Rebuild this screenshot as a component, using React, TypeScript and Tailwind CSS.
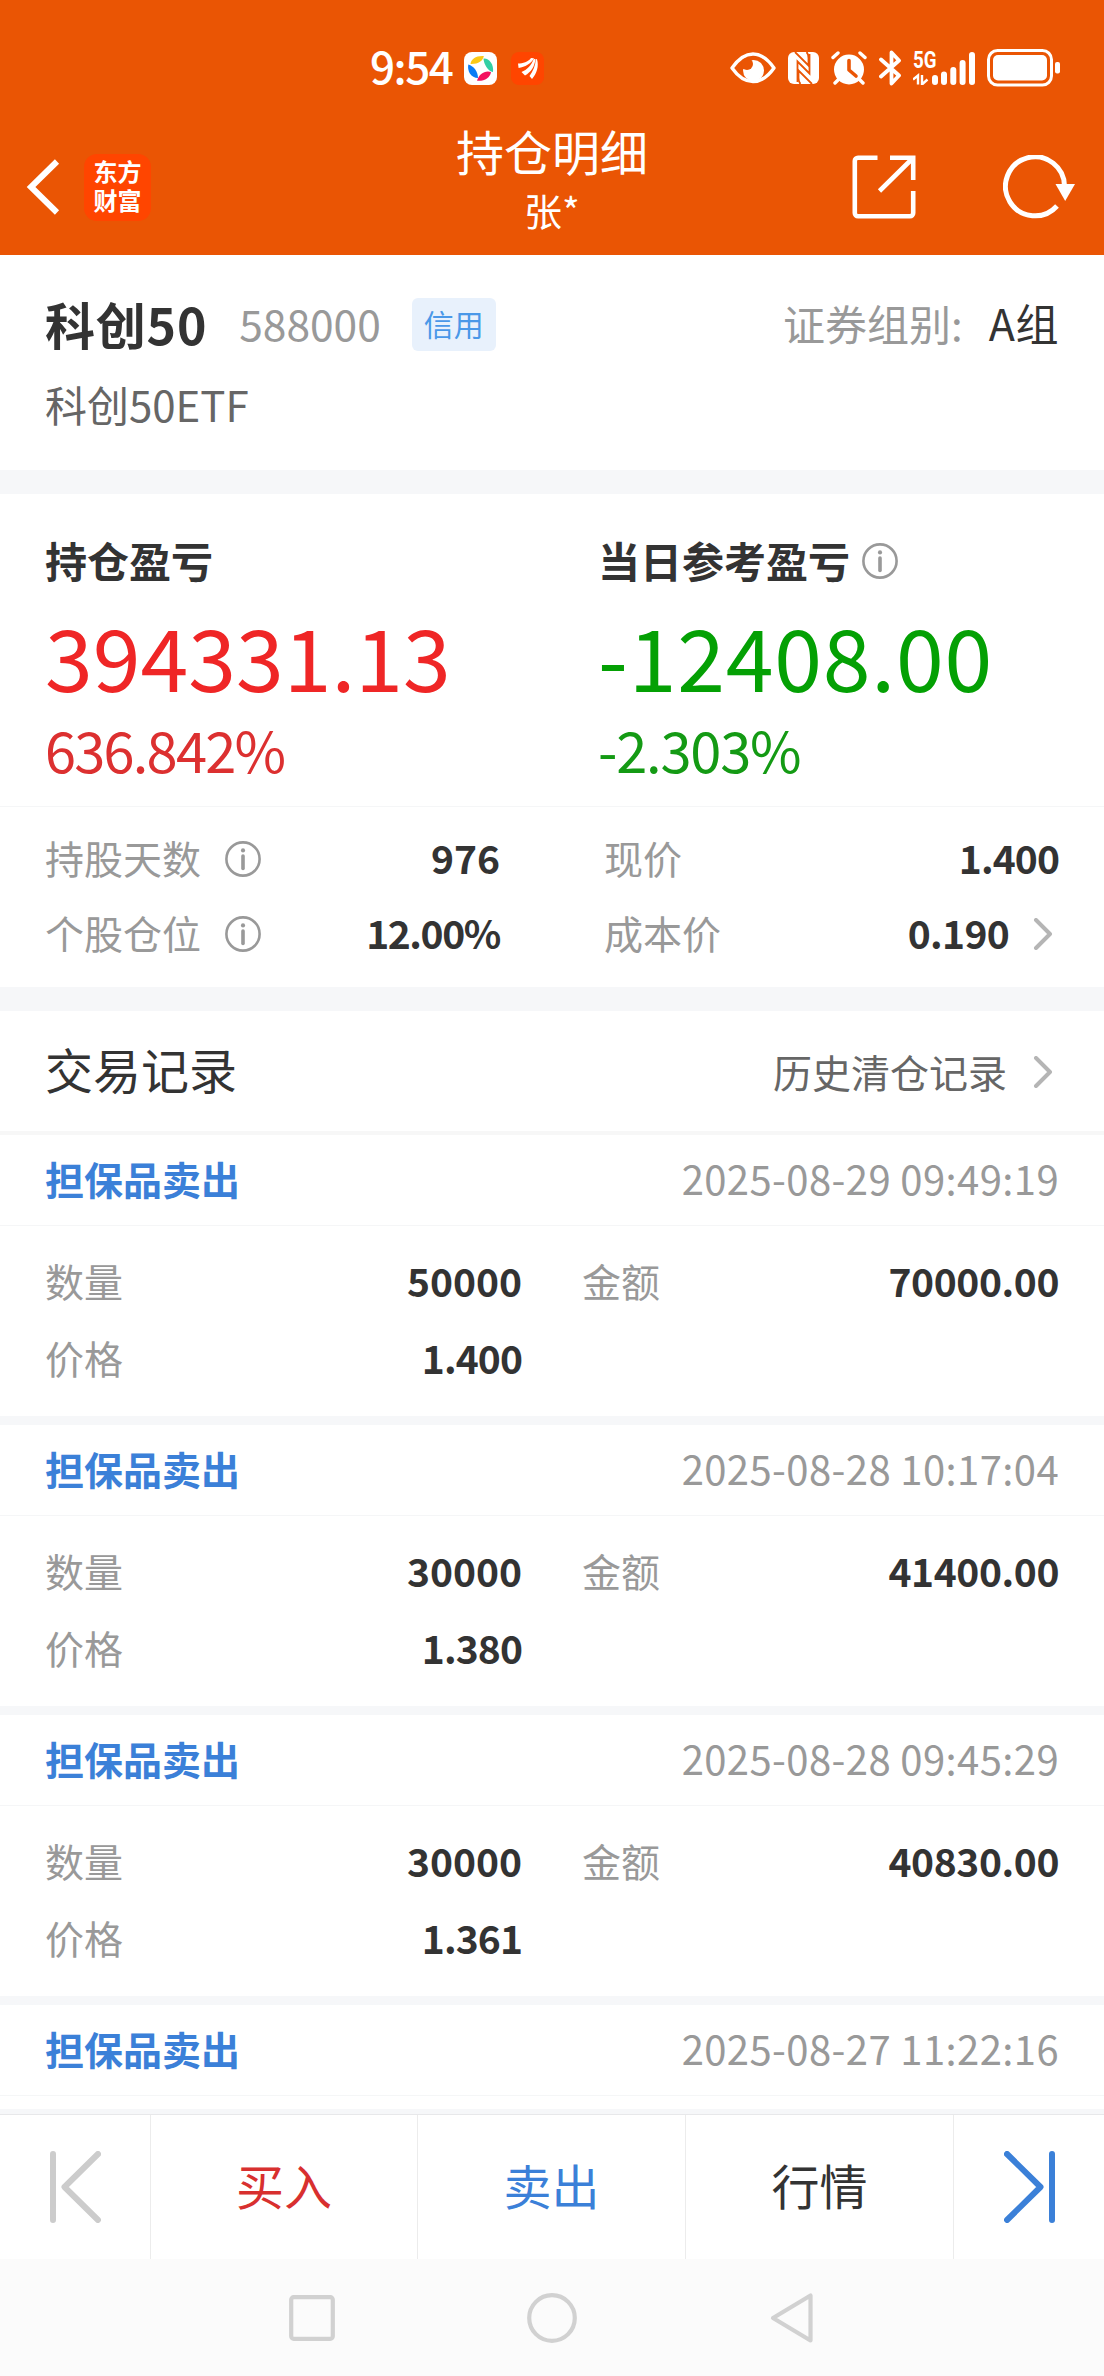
import type { ReactNode } from "react";

type TradeRecord = {
  type: string;
  time: string;
  quantity: string;
  amount: string;
  price: string;
};

const records: TradeRecord[] = [
  { type: "担保品卖出", time: "2025-08-29 09:49:19", quantity: "50000", amount: "70000.00", price: "1.400" },
  { type: "担保品卖出", time: "2025-08-28 10:17:04", quantity: "30000", amount: "41400.00", price: "1.380" },
  { type: "担保品卖出", time: "2025-08-28 09:45:29", quantity: "30000", amount: "40830.00", price: "1.361" },
];

function InfoIcon() {
  return (
    <svg className="size-9 mt-0.5 shrink-0" viewBox="0 0 36 36" fill="none">
      <circle cx="18" cy="18" r="16.6" stroke="#999" strokeWidth="2.6" />
      <circle cx="18" cy="9.4" r="2.1" fill="#999" />
      <path d="M18 15v12.5" stroke="#999" strokeWidth="3.6" strokeLinecap="round" />
    </svg>
  );
}

function ChevronIcon() {
  return (
    <svg className="w-5 h-8 mt-0.5 mr-1.5 shrink-0" viewBox="0 0 20 32" fill="none">
      <path d="M3 2l14 14L3 30" stroke="#b5b5b5" strokeWidth="4" strokeLinecap="round" strokeLinejoin="round" />
    </svg>
  );
}

function StatusBar() {
  return (
    <div className="h-[119px] pt-[17px] pl-[370px] pr-11 flex items-center">
      <span className="text-[44px] leading-none font-medium tracking-[-1.5px] w-[94px] -mt-1.5">9:54</span>
      <svg className="size-[33px]" viewBox="0 0 33 33">
        <rect width="33" height="33" rx="8" fill="#fff" />
        <path d="M6.500 12C7 7 12 3.500 19.800 4 19 9 14 12.300 6.500 12z" fill="#fbc916" />
        <path d="M19.500 6.500C25 6 30 12 29 20 24 19 20 13 19.500 6.500z" fill="#33cfa4" />
        <path d="M4.300 12.500C3 19 7 26 14 26 14 20 10 14 4.300 12.500z" fill="#0a7cf5" />
        <path d="M13 28.700C20 29.500 26 26 27 20 21 18 15 22 13 28.700z" fill="#f3115e" />
      </svg>
      <svg className="size-[33px] ml-3.5" viewBox="0 0 33 33" fill="#fff">
        <rect width="33" height="33" rx="8" fill="#ff4500" />
        <path d="M7 11.500C12 11.500 17 10 20 6l3 .3C20 12 14 15 7.600 16z" />
        <path d="M10.500 20C16 18 20.500 13 22.800 6.800l1.600.4C23.500 15 20 20 14 23.500z" />
        <path d="M18.500 24C22 19 24.400 14 24.800 7l1.200.2C28 14 26 21 21 27z" />
      </svg>

      <div className="flex items-center ml-auto">
        <svg className="w-[46px] h-[34px]" viewBox="0 0 46 34" fill="none">
          <path d="M2 17C9 7 16 3 23 3s14 4 21 14c-7 10-14 13.500-21 13.500S9 27 2 17z" stroke="#fff" strokeWidth="3.400" strokeLinejoin="round" />
          <circle cx="23.500" cy="19.500" r="10.500" fill="#fff" />
          <circle cx="17" cy="13" r="6" fill="#ea5504" />
        </svg>
        <svg className="w-[31px] h-8 ml-3" viewBox="0 0 31 32" fill="none">
          <rect width="31" height="32" rx="6" fill="#fff" />
          <g stroke="#ea5504" strokeWidth="1.800">
            <path d="M7 0l13.500 13.500V6c0-3-.5-4.500-2-6" />
            <path d="M24 32L10.500 18.500V26c0 3 .5 4.500 2 6" />
            <path d="M9.500 30V9.500l12 12V2" />
          </g>
        </svg>
        <svg className="w-9 h-[34px] ml-3" viewBox="0 0 36 34" fill="none">
          <circle cx="18" cy="18.500" r="15" fill="#fff" />
          <path d="M2 6.500l5-4.500M34 6.500L29 2M8 28l-4 4M28 28l4 4" stroke="#fff" strokeWidth="3.400" strokeLinecap="round" />
          <path d="M18 9.500v9.500l7 6" stroke="#ea5504" strokeWidth="3.600" strokeLinecap="round" strokeLinejoin="round" />
        </svg>
        <svg className="w-[23px] h-9 ml-3" viewBox="0 0 23 36" fill="none">
          <path d="M2 9.500l18 16-7.500 8V2.500l7.500 8L2 26.500" stroke="#fff" strokeWidth="3.800" strokeLinecap="round" strokeLinejoin="round" />
        </svg>
        <div className="relative w-[62px] h-[34px] ml-[11px]">
          <span className="absolute left-0 -top-[3px] text-[24px] leading-[24px] font-bold origin-left scale-x-[0.78] font-['Roboto',sans-serif]">5G</span>
          <svg className="absolute inset-0 size-full" viewBox="0 0 62 34" fill="none">
            <path d="M0 28.500l5-4v9M9 24v9.500l5.500-5" stroke="#fff" strokeWidth="2.400" />
            <path d="M22 27v4M31 23.500v7.500M40.300 19v12M49.600 12v19M59 4v27" stroke="#fff" strokeWidth="6" strokeLinecap="round" />
          </svg>
        </div>
        <svg className="w-[73px] h-[38px] ml-3" viewBox="0 0 73 38" fill="none">
          <rect x="1.500" y="1.500" width="63" height="34.500" rx="9" stroke="#fff" strokeWidth="3" />
          <rect x="6" y="6" width="54" height="25.500" rx="5" fill="#fff" />
          <rect x="68" y="13" width="5" height="11.500" rx="2" fill="#fff" />
        </svg>
      </div>
    </div>
  );
}

function TitleBar() {
  return (
    <div className="grid grid-cols-[1fr_auto_1fr] h-[136px]">
      <div className="flex items-center pl-[26px]">
        <svg className="w-[34px] h-[58px]" viewBox="0 0 34 58" fill="none">
          <path d="M31 3.500L5 29l26 25.500" stroke="#fff" strokeWidth="6" />
        </svg>
        <div className="size-[67px] ml-6 rounded-[13px] bg-[#ff4500] flex flex-col items-center justify-center text-[24px] leading-[29px] font-bold pb-1">
          <span>东方</span>
          <span>财富</span>
        </div>
      </div>
      <div className="text-center">
        <h1 className="text-[48px] leading-[62px]">持仓明细</h1>
        <p className="text-[38px] leading-[57px]">张*</p>
      </div>
      <div className="flex items-center justify-end pr-7">
        <svg className="size-[64px]" viewBox="0 0 64 64" fill="none" stroke="#fff" strokeWidth="4.600">
          <path d="M25.500 2.800H6a3.200 3.200 0 0 0-3.200 3.200v52a3.200 3.200 0 0 0 3.200 3.200h52a3.200 3.200 0 0 0 3.200-3.200V36" />
          <path d="M38 2.800h23.200V25M60.500 3.500L27.500 36" />
        </svg>
        <svg className="w-[73px] h-[64px] ml-[87px]" viewBox="0 0 73 64" fill="none">
          <path d="M61.500 32A29.500 29.500 0 1 0 54 51" stroke="#fff" strokeWidth="5" />
          <path d="M52.500 29H72L62.200 46z" fill="#fff" />
        </svg>
      </div>
    </div>
  );
}

function StatRow({ children }: { children: ReactNode }) {
  return <div className="flex items-center h-[75px] text-[39px] text-[#999]">{children}</div>;
}

function RecordHeader({ type, time }: { type: string; time: string }) {
  return (
    <div className="flex items-center justify-between h-[91px] px-[45px] pb-1 border-b border-[#f5f6f7] leading-none">
      <span className="text-[39px] font-bold text-[#3b80d8]">{type}</span>
      <span className="text-[40px] tracking-[0.4px] text-[#999]">{time}</span>
    </div>
  );
}

function RecordItem({ record }: { record: TradeRecord }) {
  return (
    <div className="h-[290px] border-b-[9px] border-[#f6f7f9]">
      <RecordHeader type={record.type} time={record.time} />
      <div className="grid grid-cols-[477px_1fr] gap-x-[60px] pt-4 px-[45px] text-[39px] leading-[77px] text-[#999]">
        <div className="flex justify-between">
          <span>数量</span>
          <b className="text-[#333]">{record.quantity}</b>
        </div>
        <div className="flex justify-between">
          <span>金额</span>
          <b className="text-[#333] tracking-[-0.4px]">{record.amount}</b>
        </div>
        <div className="flex justify-between">
          <span>价格</span>
          <b className="text-[#333] tracking-[-0.9px]">{record.price}</b>
        </div>
      </div>
    </div>
  );
}

function ActionBar() {
  return (
    <div className="grid grid-cols-[151px_267px_268px_268px_150px] h-[145px] border-t border-[#e8e8ea] bg-white text-[48px] leading-none">
      <div className="flex items-center pl-[50px] border-r border-[#ececec]">
        <svg className="w-[51px] h-[72px]" viewBox="0 0 51 72" fill="none">
          <path d="M3 3v66M48 3L14.500 36 48 69" stroke="#ccc" strokeWidth="6" strokeLinecap="round" strokeLinejoin="round" />
        </svg>
      </div>
      <div className="flex items-center justify-center pb-1.5 border-r border-[#ececec] text-[#d8302f]">买入</div>
      <div className="flex items-center justify-center pb-1.5 border-r border-[#ececec] text-[#3b80d8]">卖出</div>
      <div className="flex items-center justify-center pb-1.5 border-r border-[#ececec] text-[#333]">行情</div>
      <div className="flex items-center pl-[50px]">
        <svg className="w-[51px] h-[72px]" viewBox="0 0 51 72" fill="none">
          <path d="M48 3v66M3 3l33.500 33L3 69" stroke="#3b80d8" strokeWidth="6" strokeLinecap="round" strokeLinejoin="round" />
        </svg>
      </div>
    </div>
  );
}

function SystemNav() {
  return (
    <div className="h-[117px] bg-[#fbfbfb] flex items-center pl-[289px]">
      <svg className="w-[46px] h-[46px]" viewBox="0 0 46 46" fill="none">
        <rect x="2.200" y="2.200" width="41.600" height="41.600" rx="2.500" stroke="#d1d1d1" strokeWidth="4.200" />
      </svg>
      <svg className="w-[50px] h-[50px] ml-48" viewBox="0 0 50 50" fill="none">
        <circle cx="25" cy="25" r="22.800" stroke="#d1d1d1" strokeWidth="4.200" />
      </svg>
      <svg className="w-[44px] h-[52px] ml-[193px]" viewBox="0 0 44 52" fill="none">
        <path d="M40.500 3.500v45L3 26z" stroke="#d1d1d1" strokeWidth="4.200" strokeLinejoin="round" />
      </svg>
    </div>
  );
}

export default function App() {
  return (
    <div className="w-[1104px] h-[2376px] overflow-hidden flex flex-col bg-white text-[#333] font-['Noto_Sans_CJK_SC','Noto_Sans',sans-serif]">
      <header className="h-[255px] shrink-0 bg-[#ea5504] text-white">
        <StatusBar />
        <TitleBar />
      </header>

      <main className="flex-1 min-h-0 overflow-hidden">
        <section className="h-[239px] pt-[38px] px-[45px] border-b-[24px] border-[#f6f7f9]">
          <div className="flex items-center h-[63px]">
            <h2 className="text-[50px] leading-none font-bold tracking-[0.8px] pb-1">科创50</h2>
            <span className="text-[42.5px] leading-none text-[#999] ml-8 pb-0.5">588000</span>
            <span className="w-[84px] h-[53px] ml-[31px] rounded-md bg-[#e8f1fc] text-[#4a98e8] text-[30px] leading-[50px] text-center">信用</span>
            <span className="ml-auto text-[42px] leading-none text-[#999] pb-1">证券组别:</span>
            <span className="ml-[26px] text-[43px] leading-none tracking-[0.6px] pb-1">A组</span>
          </div>
          <p className="text-[42px] leading-[60px] text-[#666] mt-[18px]">科创50ETF</p>
        </section>

        <section className="h-[517px] border-b-[24px] border-[#f6f7f9]">
          <div className="grid grid-cols-[552px_1fr] h-[313px] pt-9 pl-[45px] border-b border-[#f5f6f7]">
            <div>
              <h3 className="text-[42px] leading-[60px] font-bold">持仓盈亏</h3>
              <p className="text-[86px] leading-[100px] mt-[15px] text-[#ef2626]">394331.13</p>
              <p className="text-[56px] leading-[70px] mt-[9px] tracking-[-1.8px] text-[#dc3030]">636.842%</p>
            </div>
            <div className="pl-px">
              <h3 className="flex items-center gap-3 text-[42px] leading-[60px] font-bold">
                当日参考盈亏
                <InfoIcon />
              </h3>
              <p className="text-[86px] leading-[100px] mt-[15px] tracking-[0.8px] text-[#04a004]">-12408.00</p>
              <p className="text-[56px] leading-[70px] mt-[9px] tracking-[-1.2px] text-[#149a14]">-2.303%</p>
            </div>
          </div>
          <div className="grid grid-cols-[455px_455px] gap-x-[104px] pt-[13px] px-[45px]">
            <StatRow>
              <span className="mr-6">持股天数</span>
              <InfoIcon />
              <b className="ml-auto text-[#333]">976</b>
            </StatRow>
            <StatRow>
              <span>现价</span>
              <b className="ml-auto text-[#333] tracking-[-0.9px]">1.400</b>
            </StatRow>
            <StatRow>
              <span className="mr-6">个股仓位</span>
              <InfoIcon />
              <b className="ml-auto text-[#333] tracking-[-1.4px]">12.00%</b>
            </StatRow>
            <StatRow>
              <span>成本价</span>
              <b className="ml-auto mr-6 text-[#333] tracking-[-0.7px]">0.190</b>
              <ChevronIcon />
            </StatRow>
          </div>
        </section>

        <section>
          <div className="flex items-center h-[124px] px-[45px] border-b-4 border-[#f7f7f7]">
            <h3 className="text-[48px] leading-none pb-1.5">交易记录</h3>
            <span className="ml-auto mr-[26px] text-[39px] leading-none text-[#666]">历史清仓记录</span>
            <ChevronIcon />
          </div>
          {records.map((record) => (
            <RecordItem key={record.time} record={record} />
          ))}
          <RecordHeader type="担保品卖出" time="2025-08-27 11:22:16" />
          <div className="mt-[13px] h-[5px] bg-[#f6f7f9]" />
        </section>
      </main>

      <ActionBar />
      <SystemNav />
    </div>
  );
}
